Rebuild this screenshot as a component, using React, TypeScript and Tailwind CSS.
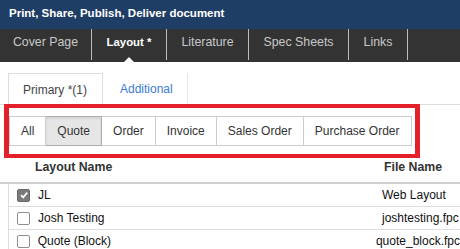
import React from "react";

const font = { fontFamily: '"Liberation Sans", Arial, sans-serif' };

function Check({ checked }: { checked?: boolean }) {
  if (checked) {
    return (
      <div className="w-[13px] h-[13px] rounded-[2px] bg-[#7a7a7a] border border-[#6a6a6a] flex items-center justify-center">
        <svg width="10" height="10" viewBox="0 0 10 10">
          <path d="M2 5.2 L4.2 7.4 L8.2 2.6" fill="none" stroke="#fff" strokeWidth="1.8" />
        </svg>
      </div>
    );
  }
  return <div className="w-[13px] h-[13px] rounded-[2px] bg-white border border-[#8f8f8f]" />;
}

export default function App() {
  const navTabs: { label: string; w: string; active?: boolean }[] = [
    { label: "Cover Page", w: "w-[92px]" },
    { label: "Layout *", w: "w-[75px]", active: true },
    { label: "Literature", w: "w-[82px]" },
    { label: "Spec Sheets", w: "w-[100px]" },
    { label: "Links", w: "w-[59px]" },
  ];
  const filters = ["All", "Quote", "Order", "Invoice", "Sales Order", "Purchase Order"];
  const rows = [
    { name: "JL", file: "Web Layout", checked: true },
    { name: "Josh Testing", file: "joshtesting.fpc" },
    { name: "Quote (Block)", file: "quote_block.fpc" },
  ];
  return (
    <div className="w-[460px] h-[249px] overflow-hidden bg-white relative" style={font}>
      {/* title */}
      <div className="h-[29px] bg-[#1f3e65] text-white font-bold text-[11.5px] leading-[14px] pl-[9px] pt-[6px]">
        Print, Share, Publish, Deliver document
      </div>
      {/* nav */}
      <div className="h-[33px] bg-[#333333] flex relative">
        {navTabs.map((t) => (
          <div
            key={t.label}
            className={`${t.w} h-[31px] border-r border-[#bdbdbd] flex justify-center pt-[6px] leading-[14px] relative ${
              t.active ? "text-white font-bold text-[11.4px]" : "text-[#c8c8c8] text-[12.35px]"
            }`}
          >
            {t.label}
            {t.active && (
              <div className="absolute left-1/2 -translate-x-1/2 bottom-[-2px] w-0 h-0 border-l-[5px] border-r-[5px] border-b-[5px] border-l-transparent border-r-transparent border-b-white" />
            )}
          </div>
        ))}
      </div>
      {/* sub tabs */}
      <div className="h-[43px] pt-[11px] flex border-b border-[#dddddd]">
        <div className="w-[8px]" />
        <div className="w-[95px] h-[32px] border border-b-0 border-[#dddddd] bg-white mb-[-1px] text-[12px] leading-[14px] text-[#444] pl-[14px] pt-[9px]">
          Primary *(1)
        </div>
        <div className="w-[85px] h-[31px] border-r border-[#e6e6e6] text-[12px] leading-[14px] text-[#3a7cd6] pl-[17px] pt-[9px]">
          Additional
        </div>
      </div>
      {/* filter toolbar */}
      <div className="relative h-[49px] pt-[11px] pl-[9px]">
        <div className="flex h-[30px]">
          {filters.map((f, i) => (
            <div
              key={f}
              className={`h-[30px] flex items-center px-[11px] text-[12px] text-[#333] border-y border-r ${
                i === 0 ? "border-l" : ""
              } ${f === "Quote" ? "bg-[#e6e6e6] border-[#adadad] shadow-[inset_0_2px_3px_rgba(0,0,0,0.08)]" : "bg-white border-[#cccccc]"}`}
            >
              {f}
            </div>
          ))}
        </div>
        <div className="absolute left-[4px] top-[-1px] w-[416px] h-[54px] border-[4px] border-x-[5px] border-[#e4202a]" />
      </div>
      {/* table header */}
      <div className="h-[30px] flex items-start pt-[6px] border-b-[2px] border-[#d0d0d0] text-[12.3px] font-bold text-[#333] leading-[14px]">
        <div className="w-[35px]" />
        <div className="w-[349px]">Layout Name</div>
        <div>File Name</div>
      </div>
      {/* rows */}
      <div className="pl-[8px]">
        {rows.map((r) => (
          <div key={r.name} className="h-[23px] flex items-center border-l border-b border-[#dddddd] text-[12px] text-[#111] whitespace-nowrap">
            <div className="w-[29px] pl-[8px] flex items-center">
              <Check checked={r.checked} />
            </div>
            <div className="w-[344px]">{r.name}</div>
            <div>{r.file}</div>
          </div>
        ))}
      </div>
    </div>
  );
}
